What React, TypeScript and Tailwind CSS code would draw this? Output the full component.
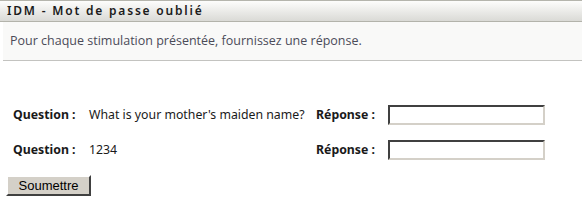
import React from 'react'

const rows = [
    { q: "What is your mother's maiden name?" },
    { q: '1234' },
]

const App = () => {
    return (
        <div className="w-[582px] h-[208px] bg-white" style={{ fontFamily: '"Noto Sans", "DejaVu Sans", sans-serif' }}>
            <div className="h-[22px] border-t border-b border-t-[#b5b5ad] border-b-[#b3b3ab] bg-gradient-to-b from-[#fdfdfc] to-[#dadad6] flex items-center pl-[7px]">
                <span className="text-[12px] font-semibold tracking-[1.8px] text-[#1b1b1b]" style={{ fontFamily: '"Noto Sans", sans-serif' }}>
                    IDM - Mot de passe oublié
                </span>
            </div>
            <div className="ml-[3px] h-[39px] bg-[#f9f9f8] border-b border-[#c3c3c0] flex items-center pl-[7px]">
                <span className="text-[12.5px] text-[#4b4b58]" style={{ fontFamily: '"Open Sans", sans-serif' }}>
                    Pour chaque stimulation présentée, fournissez une réponse.
                </span>
            </div>
            <div className="pt-[44px] pl-[13px] flex flex-col gap-[15px] text-[12.3px] text-[#1a1a1a]">
                {rows.map((r, i) => (
                    <div key={i} className="flex items-center h-[20px]">
                        <span className="w-[76px] font-bold">Question :</span>
                        <span className="w-[227px]">{r.q}</span>
                        <span className="w-[72px] font-bold">Réponse :</span>
                        <input className="w-[157px] h-[20px] bg-white border-2 border-t-[#404040] border-l-[#404040] border-b-[#d4d0c8] border-r-[#d4d0c8] outline-none" />
                    </div>
                ))}
            </div>
            <div className="pl-[6px] pt-[12px]">
                <button className="w-[85px] h-[21px] bg-[#d4d0c8] border-2 border-t-white border-l-white border-b-[#404040] border-r-[#404040] text-[13px] text-black leading-none" style={{ fontFamily: '"Liberation Sans", sans-serif' }}>
                    Soumettre
                </button>
            </div>
        </div>
    )
}

export default App
